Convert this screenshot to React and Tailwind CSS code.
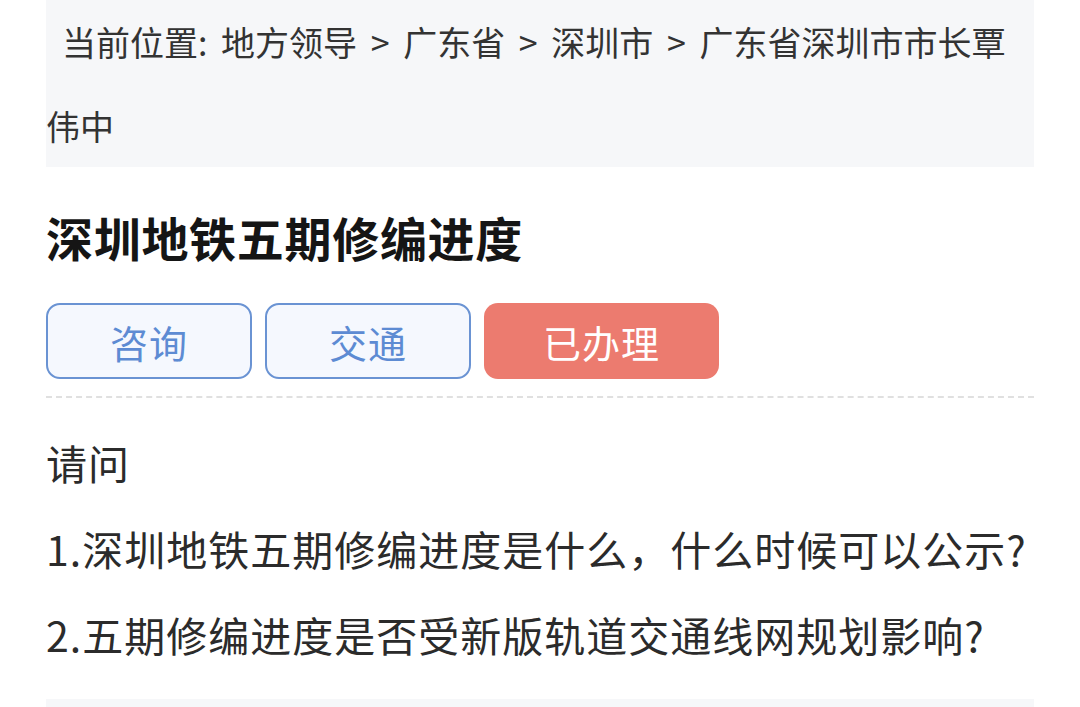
import React from 'react'

const font = { fontFamily: '"Noto Sans CJK SC", "Noto Sans", sans-serif' }

const crumbs = ['地方领导', '广东省', '深圳市', '广东省深圳市市长覃伟中']

const Tag = ({ label, active = false, wide = false }) => (
  <div
    className={`flex h-[76px] items-center justify-center rounded-[14px] text-[38px] tracking-[1px] ${
      wide ? 'w-[235px]' : 'w-[206px]'
    } ${
      active
        ? 'bg-[#ec7b6f] text-white'
        : 'border-2 border-[#6a93d3] bg-[#f5f8fe] text-[#5d8bd3]'
    }`}
  >
    {label}
  </div>
)

export default function App() {
  return (
    <div className="min-h-[707px] w-[1080px] overflow-hidden bg-white" style={font}>
      <div className="ml-[46px] w-[988px]">
        <div className="h-[167px] bg-[#f6f7f9] text-[34px] leading-[84px] text-[#333] [text-indent:16px] [word-spacing:6px]">
          当前位置:{' '}
          {crumbs.map((c, i) => (
            <React.Fragment key={c}>
              {i > 0 && ' > '}
              {c}
            </React.Fragment>
          ))}
        </div>

        <h1 className="mt-[42px] text-[47px] font-bold leading-[56px] tracking-[0.7px] text-[#151515]">
          深圳地铁五期修编进度
        </h1>

        <div className="mt-[38px] flex gap-[13px]">
          <Tag label="咨询" />
          <Tag label="交通" />
          <Tag label="已办理" active wide />
        </div>

        <div className="mt-[17px] border-t-2 border-dashed border-[#e0e0e0]" />

        <div className="mt-[21px] text-[41px] leading-[86px] tracking-[1px] text-[#2b2b2b]">
          <p>请问</p>
          <p>1.深圳地铁五期修编进度是什么，什么时候可以公示?</p>
          <p>2.五期修编进度是否受新版轨道交通线网规划影响?</p>
        </div>

        <div className="mt-[22px] h-[40px] bg-[#f6f7f9]" />
      </div>
    </div>
  )
}
